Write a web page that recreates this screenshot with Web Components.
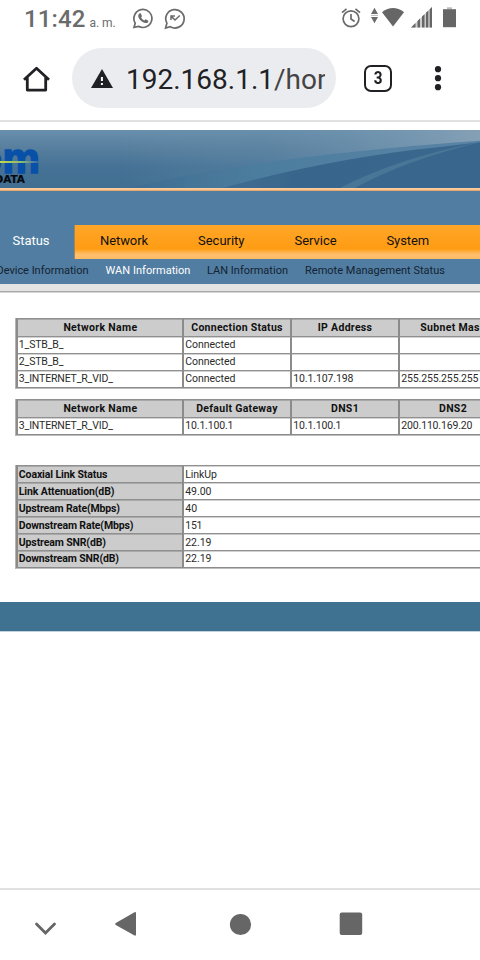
<!DOCTYPE html>
<html lang="es"><head><meta charset="utf-8"><title>WAN Information</title>
<style>body{margin:0;background:#fff;overflow:hidden;font-family:Roboto,"Liberation Sans",sans-serif}</style></head>
<body><phone-screen></phone-screen>
<script>
const define=(name,html,setup)=>customElements.define(name,class extends HTMLElement{
  constructor(){super();this.attachShadow({mode:'open'}).innerHTML=html}
  connectedCallback(){if(setup)setup(this)}
});
/* Text label whose tracking is adjusted to a given advance width. */
define('fit-label','<style>:host{display:inline-block;white-space:nowrap;flex:none}span{display:inline-block}</style><span><slot></slot></span>',el=>{
  const s=el.shadowRoot.querySelector('span'),w=+el.getAttribute('w');
  s.style.letterSpacing='0px';
  const n=el.textContent.length;
  if(w&&n)s.style.letterSpacing=(w-s.getBoundingClientRect().width)/n+'px';
});
define('status-bar',`<style>:host{display:flex;height:38px;color:#6b6b6b;position:relative;align-items:flex-start}
.t{font:500 24px/28px Roboto;margin:5px 0 0 24px}.a{font:12px/16px Roboto;margin:15px 0 0 4px}svg{position:absolute;left:0;top:0}</style>
<fit-label class="t" w="61.5">11:42</fit-label><fit-label class="a" w="26">a. m.</fit-label>
<svg width="480" height="38" fill="none" stroke="#6b6b6b">
<path d="M134 27.400l1.200-4.300a9 9 0 1 1 3.300 3.200z" stroke-width="1.700"/><path d="M139.200 13.500l1.600-.3 1.200 3-.9 1.400q1.100 2 3.100 2.900l1.500-1.200 2.600 1.400q.2 2.300-2.500 2.400c-4.300-.5-8.200-4.900-7.500-8z" fill="#6b6b6b" stroke="none"/>
<path d="M165.600 28l1.300-4.800a9.200 9.200 0 1 1 3.400 3.500z" stroke-width="1.700"/><path d="M171 20v-4h4M171.500 16.600l3.500 3.400 4.800-4.500" stroke-width="1.500"/>
<circle cx="351" cy="18.700" r="7.900" stroke-width="1.700"/><path d="M351 14v5l3.600 2.500M342 12.700l4.500-3.800M360 12.700l-4.500-3.800" stroke-width="1.700"/>
<path d="M371 14l3.500-6.300 3.500 6.300zM371 17l3.500 6.300 3.500-6.300z" fill="#6b6b6b" stroke="none"/><path d="M371 15.400h7" stroke="#bbb" stroke-width="1"/>
<path d="M382 12.200q11-8.400 22 0l-11 14.300z" fill="#666" stroke="none"/>
<path d="M411 27.500L432 7v20.500z" fill="#ccc" stroke="none"/><path d="M411 27.500l4.500-4.500v4.500zM417.500 27.500v-6.500l2.500-2.400v8.900zM422 27.500v-10.900l2.500-2.400v13.300zM426 27.500v-14.800l2.300-2.200v17zM429.700 27.500v-18.200L432 7v20.500z" fill="#666" stroke="none"/>
<path d="M447 7.300h5v2h-5z" fill="#bbb" stroke="none"/><path d="M443 9.200h13v18h-13z" fill="#666" stroke="none"/></svg>`);
define('browser-bar',`<style>:host{display:flex;box-sizing:border-box;padding-top:10px;border-bottom:2px solid #e1e1e1;height:84px}
.home{margin:17px 0 0 22px;width:28px;height:28px}.pill{box-sizing:border-box;margin-left:22px;width:264px;height:60px;border-radius:30px;background:#ebecf0;display:flex;align-items:center;padding-left:19px}
.url{margin-left:13px;width:199px;overflow:hidden;font:28px/40px Roboto;color:#202124;white-space:nowrap;padding-top:4px}.url i{font-style:normal;color:#444}
.tabs{box-sizing:border-box;width:28px;height:27px;border:2.700px solid #202124;border-radius:7px;margin:17px 0 0 28px;display:flex;justify-content:center;font:bold 18px/22px Roboto;color:#202124}.tabs span{transform:scaleX(.85)}
.dots{margin:17px 0 0 41px}</style>
<svg class="home" viewBox="0 0 28 28"><path d="M2 14.800L14.500 3.300 27 14.800M5.300 12V25.100H23.700V12" fill="none" stroke="#202124" stroke-width="2.800" stroke-linejoin="round"/></svg>
<div class="pill"><svg width="22" height="19"><path d="M11 0l11 19H0z" fill="#202124"/><path d="M9.900 8h2v4h-2zM9.900 14h2v2h-2z" fill="#fff"/></svg><div class="url">192.168.1.1<i>/home</i></div></div>
<div class="tabs"><span>3</span></div><svg class="dots" width="10" height="28" fill="#202124"><circle cx="5" cy="4.200" r="3.100"/><circle cx="5" cy="13.200" r="3.100"/><circle cx="5" cy="22.200" r="3.100"/></svg>`);
define('site-banner',`<style>:host{display:block;margin-top:8px;height:95px;background:#517da2;position:relative;overflow:hidden}
svg{display:block}.m,.d,.o{position:absolute;white-space:nowrap}.m,.o{top:8px;font:bold 42px/42px "Liberation Sans";color:#0950a8;-webkit-text-stroke:1.600px #0950a8}.m{left:2.500px}.o{left:-23.500px}
.d{left:-5.500px;top:42.500px;font:bold 10.500px/12px "DejaVu Sans";color:#05090f;-webkit-text-stroke:.2px #05090f}.y{position:absolute;left:0;top:31px;width:38px;height:1.500px;background:linear-gradient(90deg,#c6d848,#84b870 60%,#3968b5)}
.l{height:3.500px;background:linear-gradient(#f8d2ac,#fcc28c 55%,#d79c59)}</style>
<svg width="480" height="57.500" viewBox="0 0 480 57.500"><defs>
<linearGradient id="g" x2="0" y2="1"><stop stop-color="#6890ad"/><stop offset=".3" stop-color="#587f9e"/><stop offset=".65" stop-color="#447195"/><stop offset="1" stop-color="#416f91"/></linearGradient>
<linearGradient id="h" x2="1" y2="0"><stop offset="0" stop-color="#7398b1" stop-opacity="0"/><stop offset=".4" stop-color="#668ca9" stop-opacity=".35"/><stop offset="1" stop-color="#84a0b6"/></linearGradient>
<linearGradient id="a" x2="1" y2="0"><stop stop-color="#3e6c91"/><stop offset=".35" stop-color="#4c7d9e"/><stop offset="1" stop-color="#5a84a5"/></linearGradient>
<linearGradient id="b"><stop stop-color="#406e92"/><stop offset=".3" stop-color="#38658b"/><stop offset="1" stop-color="#3a678e"/></linearGradient><filter id="f"><feGaussianBlur stdDeviation=".6"/></filter></defs>
<path fill="url(#g)" d="M0 0h480v58H0z"/><path fill="url(#h)" d="M120 0h360v20Q290 25 190 50L120 58z"/>
<g filter="url(#f)"><path d="M130 58Q260 26 490 10v50H130z" fill="url(#a)"/><path d="M215 60Q330 28 440 17L490 11v49H215z" fill="url(#b)"/><path d="M340 58Q400 27 485 11v49H340z" fill="#557f9f" opacity=".6"/><path d="M355 58Q405 30 485 11v49H355z" fill="#39668d"/></g></svg>
<div class="l"></div><span class="o">o</span><span class="m">m</span><i class="y"></i><span class="d">DATA</span>`);
define('main-nav',`<style>:host{display:flex;height:34px;font:13px/32px Roboto;color:#111}
.s{box-sizing:border-box;width:75px;padding-left:12.500px;background:#517da2;color:#fff;border-right:1px solid #9a8b66}
.n{flex:1;display:flex;padding-left:25px;background:linear-gradient(#ffa629,#ff9c13 24px,#ffa422 25px,#ffb14b 27px,#ffc070 30px,#ffba65)}
</style><div class="s"><fit-label w="37">Status</fit-label></div><div class="n"><fit-label w="48" style="margin-right:50px">Network</fit-label><fit-label w="46.500" style="margin-right:50px">Security</fit-label><fit-label w="42" style="margin-right:50px">Service</fit-label><fit-label w="42.500">System</fit-label></div>`);
define('sub-nav',`<style>:host{display:flex;box-sizing:border-box;height:32px;background:#517da2;border-bottom:7px solid #e3e3e3;box-shadow:0 1.500px #aaa;margin-bottom:1px;font:11px/23px Roboto;color:#142331}</style>
<fit-label w="92" style="margin-left:-3.500px">Device Information</fit-label><fit-label w="85" style="margin-left:17px;color:#fff">WAN Information</fit-label><fit-label w="81" style="margin-left:16.500px">LAN Information</fit-label><fit-label w="140" style="margin-left:17px">Remote Management Status</fit-label>`);
/* Rows are arrays of [text, text width]; the first row or column is the header. */
define('data-table',`<style>:host{display:block;width:540px;margin-left:15px;border-left:1px solid #b5b5b5;box-sizing:border-box;color:#2b2b2b;font:10.500px/16px Roboto}
.r{display:grid;grid-template-columns:166px 108px 108px 108px 50px;height:17px}.r.wide{grid-template-columns:166px 374px;line-height:18px}
.c{box-sizing:border-box;border-top:1px solid #909090;box-shadow:inset 0 1px #d2d2d2;border-left:2px solid #8b8b8b;padding-left:1.300px;overflow:hidden}
.h{background:#ccc;font-weight:bold;color:#111;box-shadow:inset 0 1px #a8a8a8}.head{height:18px;line-height:18px}.head .c{text-align:center;padding:0}.c:first-child{padding-left:.8px}.e{height:2px;background:linear-gradient(#8b8b8b 50%,#bdbdbd 50%)}</style><div></div><div class="e"></div>`,el=>{
  const box=el.shadowRoot.querySelector('div'),kv=el.hasAttribute('pairs');
  JSON.parse(el.getAttribute('rows')).forEach((row,i)=>{const r=document.createElement('div');r.className='r'+(kv?' wide':i?'':' head');if(kv&&i==5)r.style.lineHeight='16px';
    row.forEach(([t,w],j)=>{const c=document.createElement('div');c.className='c'+((kv?j==0:i==0)?' h':'');if(t)c.innerHTML='<fit-label w="'+w+'">'+t+'</fit-label>';r.append(c)});box.append(r)});
});
define('nav-buttons',`<style>:host{display:block;height:72px;box-sizing:border-box;border-top:2px solid #e1e1e1}svg{display:block}</style>
<svg width="480" height="70" fill="#666"><path d="M36.500 34l9 9 9-9" fill="none" stroke="#666" stroke-width="2.800" stroke-linecap="round"/><path d="M115.800 33L134.500 22.200Q136 21.800 136 23V44.500Q136 46 134.500 45.500L115.800 35Q114.200 34 115.800 33z"/><circle cx="240.500" cy="34.500" r="10.600"/><rect x="339.700" y="22.600" width="22.500" height="22.500" rx="2"/></svg>`);
define('phone-screen',`<style>:host{display:flex;flex-direction:column;width:480px;height:960px;overflow:hidden}footer{margin-top:33px;height:29px;background:#3f7190;border-bottom:1px solid #c0d2de;flex:none}nav-buttons{margin-top:auto}status-bar,browser-bar,site-banner,main-nav,sub-nav,data-table,nav-buttons{flex:none}</style>
<status-bar></status-bar><browser-bar></browser-bar><site-banner></site-banner><main-nav></main-nav><sub-nav></sub-nav>
<data-table style="margin-top:26px" rows='[[["Network Name",74],["Connection Status",91.500],["IP Address",54.500],["Subnet Mask",65.500]],[["1_STB_B_",44.500],["Connected",50],["",0],["",0]],[["2_STB_B_",44.500],["Connected",50],["",0],["",0]],[["3_INTERNET_R_VID_",94],["Connected",50],["10.1.107.198",60],["255.255.255.255",77]]]'></data-table>
<data-table style="margin-top:10px" rows='[[["Network Name",74],["Default Gateway",81.500],["DNS1",28],["DNS2",28]],[["3_INTERNET_R_VID_",94],["10.1.100.1",48],["10.1.100.1",48],["200.110.169.20",71]]]'></data-table>
<data-table pairs style="margin-top:29px" rows='[[["Coaxial Link Status",88.500],["LinkUp",31.500]],[["Link Attenuation(dB)",95.500],["49.00",26]],[["Upstream Rate(Mbps)",101],["40",12]],[["Downstream Rate(Mbps)",114.500],["151",17]],[["Upstream SNR(dB)",87],["22.19",26]],[["Downstream SNR(dB)",100],["22.19",26]]]'></data-table>
<footer></footer><nav-buttons></nav-buttons>`);
</script></body></html>
